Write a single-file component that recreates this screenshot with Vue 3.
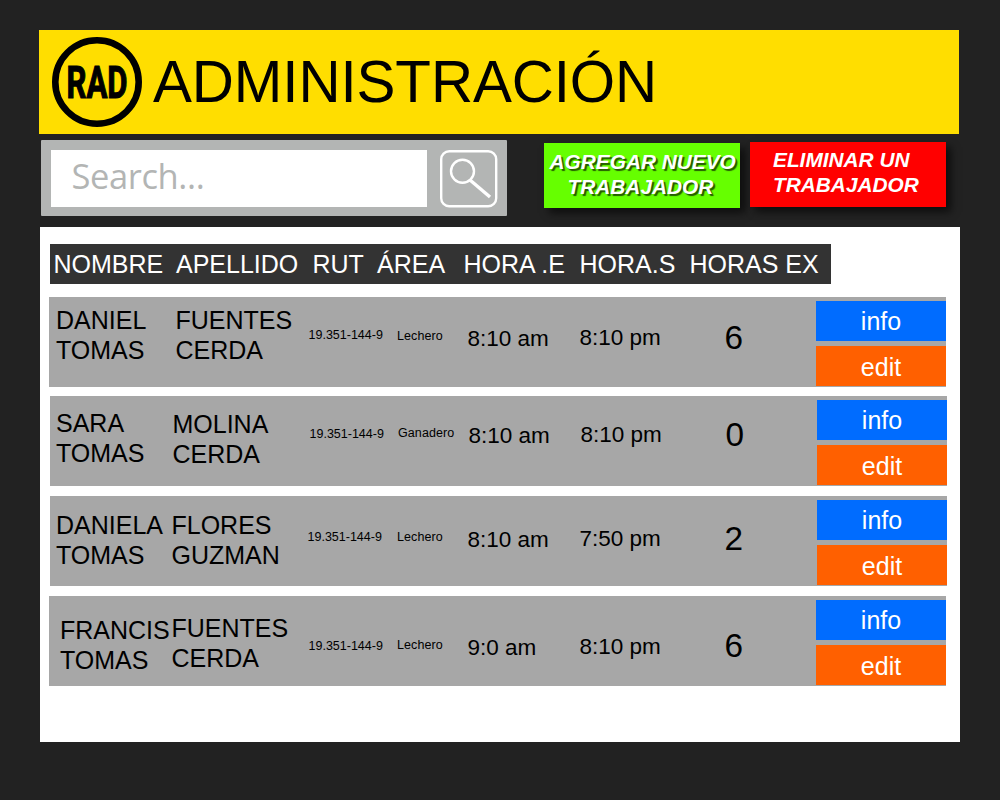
<script setup>
const columns = [
  { label: 'NOMBRE', cls: 'c-name' },
  { label: 'APELLIDO', cls: 'c-last' },
  { label: 'RUT', cls: 'c-rut' },
  { label: 'ÁREA', cls: 'c-area' },
  { label: 'HORA .E', cls: 'c-in' },
  { label: 'HORA.S', cls: 'c-out' },
  { label: 'HORAS EX', cls: 'c-extra' },
]

// Each cell: text, left inset and top inset inside its grid track.
const workers = [
  {
    shift: 0,
    cells: [
      ['name', 'DANIEL\nTOMAS', 1, 8], ['name', 'FUENTES\nCERDA', 4.5, 8],
      ['small', '19.351-144-9', 1.5, 31], ['small wide', 'Lechero', 2, 32],
      ['time', '8:10 am', 1.5, 29], ['time', '8:10 pm', 1.5, 28], ['extra', '6', 1.5, 22],
    ],
  },
  {
    shift: 1,
    cells: [
      ['name', 'SARA\nTOMAS', 0, 12], ['name', 'MOLINA\nCERDA', 0.5, 13],
      ['small', '19.351-144-9', 1.5, 31], ['small wide', 'Ganadero', 2, 30],
      ['time', '8:10 am', 1.5, 27], ['time', '8:10 pm', 1.5, 26], ['extra', '0', 1.5, 20],
    ],
  },
  {
    shift: 1,
    cells: [
      ['name', 'DANIELA\nTOMAS', 0, 14], ['name', 'FLORES\nGUZMAN', -0.5, 14],
      ['small', '19.351-144-9', -0.5, 34], ['small wide', 'Lechero', 1, 34],
      ['time', '8:10 am', 0.5, 31], ['time', '7:50 pm', 0.5, 30], ['extra', '2', 0.5, 24],
    ],
  },
  {
    shift: 0,
    cells: [
      ['name', 'FRANCIS\nTOMAS', 5, 19], ['name', 'FUENTES\nCERDA', 0.5, 17],
      ['small', '19.351-144-9', 1.5, 43], ['small wide', 'Lechero', 2, 42],
      ['time', '9:0 am', 1.5, 39], ['time', '8:10 pm', 1.5, 38], ['extra', '6', 1.5, 31],
    ],
  },
]
</script>

<template>
  <div class="page">
    <header class="banner">
      <svg class="logo" width="90" height="90" viewBox="0 0 90 90">
        <circle cx="45" cy="45" r="41.7" fill="none" stroke="#000" stroke-width="6.6" />
        <text x="14.5" y="61.2" textLength="61" lengthAdjust="spacingAndGlyphs">RAD</text>
      </svg>
      <h1>ADMINISTRACIÓN</h1>
    </header>

    <div class="toolbar">
      <div class="search">
        <input type="text" placeholder="Search..." />
        <svg width="58" height="58" viewBox="0 0 58 58" fill="none" stroke="#fff">
          <rect x="1.2" y="1.2" width="55" height="55" rx="8" stroke-width="2.4" />
          <circle cx="22.5" cy="21.2" r="11.5" stroke-width="2.4" />
          <path d="M30.3 30.2 L50 47" stroke-width="3.4" />
        </svg>
      </div>
      <button class="action add"><span>AGREGAR NUEVO</span><span>TRABAJADOR</span></button>
      <button class="action remove"><span>ELIMINAR UN</span><span>TRABAJADOR</span></button>
    </div>

    <main class="panel">
      <div class="head">
        <span v-for="c in columns" :key="c.label" :class="c.cls">{{ c.label }}</span>
      </div>
      <div class="rows">
        <div v-for="(w, i) in workers" :key="i" class="row" :style="{ marginLeft: w.shift + 'px' }">
          <div
            v-for="(c, j) in w.cells"
            :key="j"
            :class="['cell', c[0]]"
            :style="{ marginLeft: c[2] + 'px', paddingTop: c[3] + 'px' }"
          >{{ c[1] }}</div>
          <div class="buttons">
            <button class="info">info</button>
            <button class="edit">edit</button>
          </div>
        </div>
      </div>
    </main>
  </div>
</template>

<style>
body {
  margin: 0;
  background: #222;
}
</style>

<style scoped>
.page {
  box-sizing: border-box;
  width: 1000px;
  height: 800px;
  padding: 30px 40px 0 39px;
  background: #222;
  font-family: "Liberation Sans", Arial, sans-serif;
  overflow: hidden;
}
button {
  border: 0;
  margin: 0;
  padding: 0;
  font-family: inherit;
  color: #fff;
}
.banner {
  display: flex;
  box-sizing: border-box;
  width: 920px;
  height: 104px;
  padding: 7px 0 0 13px;
  background: #ffde00;
}
.logo {
  overflow: visible;
}
.logo text {
  font: 700 45px Roboto, sans-serif;
  fill: #000;
  stroke: #000;
  stroke-width: 1.2px;
}
h1 {
  margin: 12px 0 0 11px;
  font-size: 58.33px;
  line-height: 66px;
  letter-spacing: -0.1px;
  font-weight: 400;
  color: #000;
}
.toolbar {
  display: flex;
  align-items: flex-start;
  height: 93px;
}
.search {
  display: flex;
  box-sizing: border-box;
  width: 466px;
  height: 76px;
  margin: 6.3px 0 0 1.5px;
  padding: 9.7px 0 0 10.5px;
  border-radius: 1px;
  background: #b3b5b4;
}
.search input {
  box-sizing: border-box;
  width: 376px;
  height: 57.5px;
  margin: 0 13px 0 0;
  padding: 0 0 6px 20.5px;
  border: 0;
  border-radius: 0;
  outline: 0;
  background: #fff;
  font: 34.5px "Open Sans", sans-serif;
  letter-spacing: -0.4px;
}
.search input::placeholder {
  color: #b3b5b4;
  opacity: 1;
}
.action {
  box-sizing: border-box;
  width: 196px;
  height: 65px;
  display: flex;
  flex-direction: column;
  align-items: flex-start;
  font-size: 20.83px;
  line-height: 25px;
  font-weight: 700;
  font-style: italic;
  white-space: nowrap;
  box-shadow: 5px 5px 8px rgba(0, 0, 0, 0.6);
}
.add {
  margin: 9px 0 0 37.5px;
  padding: 6px 0 0 5.5px;
  background: #6f0;
  text-shadow: 2px 2px 1px rgba(0, 0, 0, 0.65);
}
.add span + span {
  padding-left: 18px;
}
.remove {
  margin: 8px 0 0 10px;
  padding: 5px 0 0 23px;
  background: #f00;
}
.panel {
  box-sizing: border-box;
  width: 920px;
  height: 515px;
  margin-left: 1px;
  padding: 17px 0 0 9px;
  background: #fff;
}
.head {
  display: grid;
  grid-template-columns: 122.5px 136.5px 64.5px 86.5px 116px 110px 142px;
  box-sizing: border-box;
  width: 781px;
  height: 40px;
  margin-left: 1px;
  padding: 5px 0 0 3.5px;
  background: #333;
  color: #fff;
  font-size: 25px;
  line-height: 30px;
  white-space: nowrap;
}
.rows {
  display: grid;
  gap: 10px;
  margin-top: 13px;
}
.row {
  display: grid;
  grid-template-columns: 116px 136px 88px 71px 112px 145px 93px 130px;
  box-sizing: border-box;
  width: 897px;
  height: 90px;
  padding-left: 6px;
  background: #a7a7a7;
}
.row:first-child {
  margin-bottom: -1px;
}
.cell {
  color: #000;
  white-space: pre;
}
.name {
  font-size: 25px;
  line-height: 30px;
}
.small {
  font-size: 12.5px;
  line-height: 14px;
}
.wide {
  letter-spacing: 0.1px;
}
.time {
  font-size: 22.5px;
  line-height: 25px;
}
.extra {
  font-size: 33.33px;
  line-height: 37px;
}
.buttons {
  display: flex;
  flex-direction: column;
  gap: 5px;
  padding-top: 4px;
}
.buttons button {
  height: 40px;
  font-size: 25px;
  line-height: 30px;
}
.info {
  background: #006cff;
}
.edit {
  background: #ff6000;
}
.buttons .edit {
  padding-top: 2px;
}
</style>
